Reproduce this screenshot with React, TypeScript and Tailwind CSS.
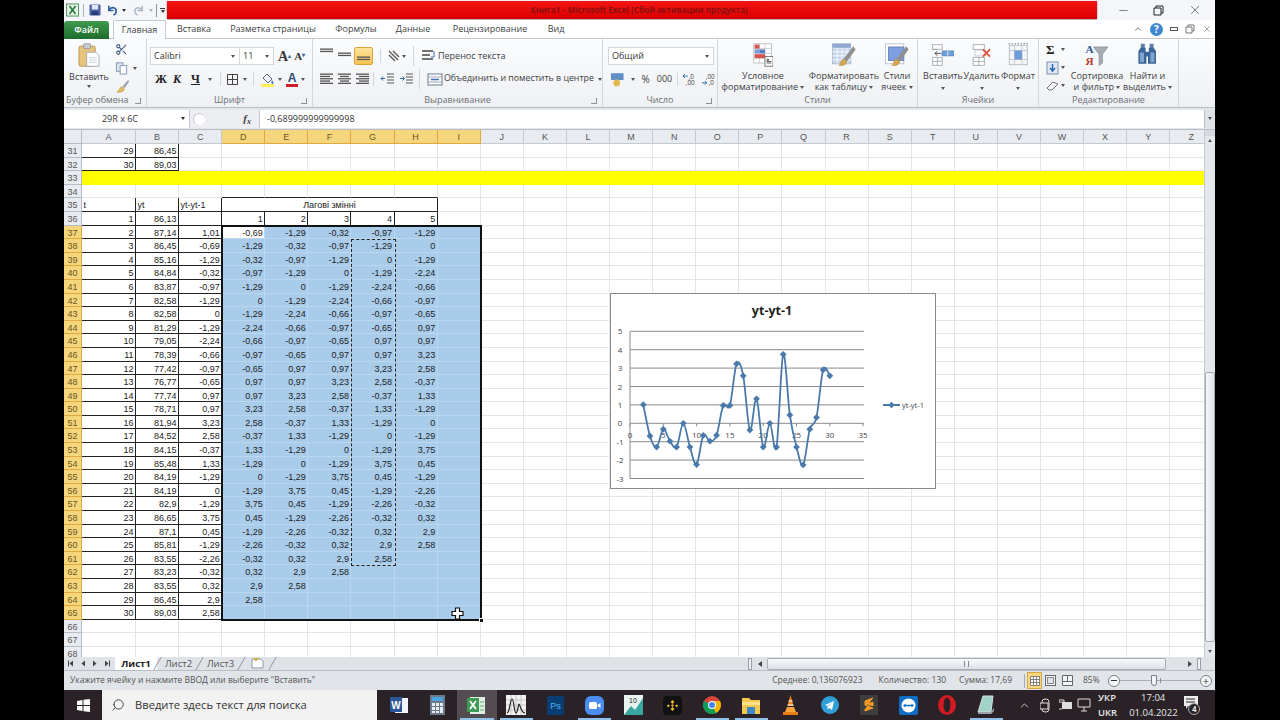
import { ChevronUp, Search, X, Minus, Scissors } from "lucide-react";

const sans = "font-['Open_Sans',sans-serif]";
const cellFont = "font-['Liberation_Sans',sans-serif]";

const diffs = ["1,01","-0,69","-1,29","-0,32","-0,97","-1,29","0","-1,29","-2,24","-0,66","-0,97","-0,65","0,97","0,97","3,23","2,58","-0,37","1,33","-1,29","0","-1,29","3,75","0,45","-1,29","-2,26","-0,32","0,32","2,9","2,58"];
const yt = ["87,14","86,45","85,16","84,84","83,87","82,58","82,58","81,29","79,05","78,39","77,42","76,77","77,74","78,71","81,94","84,52","84,15","85,48","84,19","84,19","82,9","86,65","87,1","85,81","83,55","83,23","83,55","86,45","89,03"];
const letters = "ABCDEFGHIJKLMNOPQRSTUVWXYZ".split("");

const blank = "border-r border-b border-[#e3e5e8]";
const boxed = "border-r border-b border-[#222]";

function Cell({ v, className = "", wide, left }: { v?: string; className?: string; wide?: boolean; left?: boolean }) {
  return (
    <div className={`${wide ? "w-[54px]" : "w-[43.1px]"} h-full shrink-0 overflow-hidden whitespace-nowrap px-[1.5px] leading-[14px] ${left ? "text-left" : "text-right"} ${className}`}>
      {v}
    </div>
  );
}

function RowHead({ n, on }: { n: number; on?: boolean }) {
  return (
    <div className={`w-[18px] h-full shrink-0 text-center leading-[14px] border-r border-b ${on ? "bg-[#f6d67c] border-[#e0a93f] text-[#6a5520]" : "bg-[#e8ecf1] border-[#b5bcc6] text-[#555]"}`}>
      {n}
    </div>
  );
}

function Filler({ from, className = blank }: { from: number; className?: string }) {
  return (
    <>
      {letters.slice(from).map((l) => (
        <Cell key={l} className={className} />
      ))}
    </>
  );
}

function Row({ children }: { children: React.ReactNode }) {
  return <div className="flex h-[13.6px]">{children}</div>;
}

function Sheet() {
  const rows = [];
  for (let i = 0; i < 29; i++) {
    const lags = [1, 2, 3, 4, 5].map((k) => diffs[i + k]);
    rows.push(
      <Row key={i}>
        <RowHead n={37 + i} on />
        <Cell wide v={String(i + 2)} className={boxed} />
        <Cell v={yt[i]} className={boxed} />
        <Cell v={diffs[i]} className={boxed} />
        {lags.map((v, k) => (
          <Cell key={k} v={v} className={`border-r border-b border-[#bcd6ee] ${i === 0 && k === 0 ? "bg-white" : "bg-[#a9cceb]"}`} />
        ))}
        <Cell className="border-r border-b border-[#bcd6ee] bg-[#a9cceb]" />
        <Filler from={9} />
      </Row>
    );
  }
  return (
    <div className={`${cellFont} text-[9px] text-[#222] w-[1140px]`}>
      <Row>
        <RowHead n={31} />
        <Cell wide v="29" className={boxed} />
        <Cell v="86,45" className={boxed} />
        <Filler from={2} />
      </Row>
      <Row>
        <RowHead n={32} />
        <Cell wide v="30" className={boxed} />
        <Cell v="89,03" className={boxed} />
        <Filler from={2} />
      </Row>
      <Row>
        <RowHead n={33} />
        <div className="flex-1 h-full bg-[#ffff00]" />
      </Row>
      <Row>
        <RowHead n={34} />
        <Cell wide className={blank} />
        <Cell className={blank} />
        <Cell className={blank} />
        {[0, 1, 2, 3, 4].map((k) => (
          <Cell key={k} className={boxed + " border-r-[#e3e5e8]"} />
        ))}
        <Filler from={8} />
      </Row>
      <Row>
        <RowHead n={35} />
        <Cell wide left v="t" className={boxed} />
        <Cell left v="yt" className={boxed} />
        <Cell left v="yt-yt-1" className={boxed} />
        <div className={`w-[215.5px] h-full shrink-0 text-center leading-[14px] ${boxed}`}>Лагові змінні</div>
        <Filler from={8} />
      </Row>
      <Row>
        <RowHead n={36} />
        <Cell wide v="1" className={boxed} />
        <Cell v="86,13" className={boxed} />
        <Cell className={boxed} />
        {["1", "2", "3", "4", "5"].map((v) => (
          <Cell key={v} v={v} className={boxed} />
        ))}
        <Filler from={8} />
      </Row>
      {rows}
      {[66, 67, 68].map((n) => (
        <Row key={n}>
          <RowHead n={n} />
          <Cell wide className={blank} />
          <Filler from={1} />
        </Row>
      ))}
    </div>
  );
}

function ColHeads() {
  return (
    <div className={`${cellFont} flex h-[14px] text-[9px] w-[1140px]`}>
      <div className="w-[18px] h-full shrink-0 bg-[#e8ecf1] border-r border-b border-[#b5bcc6]" />
      {letters.map((l, i) => {
        const on = i >= 3 && i <= 8;
        return (
          <div key={l} className={`${i === 0 ? "w-[54px]" : "w-[43.1px]"} shrink-0 h-full text-center leading-[14px] border-r border-b ${on ? "bg-[#f6d67c] border-[#e0a93f] text-[#6a5520]" : "bg-[#e8ecf1] border-[#c3c9d1] text-[#555]"}`}>
            {l}
          </div>
        );
      })}
    </div>
  );
}

function catmull(p: [number, number][]) {
  let d = `M${p[0][0]} ${p[0][1]}`;
  for (let i = 0; i < p.length - 1; i++) {
    const a = p[i - 1] ?? p[i];
    const b = p[i];
    const c = p[i + 1];
    const e = p[i + 2] ?? c;
    const t = 6;
    d += ` C${b[0] + (c[0] - a[0]) / t} ${b[1] + (c[1] - a[1]) / t} ${c[0] - (e[0] - b[0]) / t} ${c[1] - (e[1] - b[1]) / t} ${c[0]} ${c[1]}`;
  }
  return d;
}

function Chart() {
  const X = (v: number) => 20 + v * 6.66;
  const Y = (v: number) => 130.3 - v * 18.4;
  const pts = diffs.map((s, i) => [X(i + 2), Y(parseFloat(s.replace(",", ".")))] as [number, number]);
  return (
    <div className="absolute left-[546px] top-[163px] w-[326px] h-[196px] bg-white border border-[#8a8a8a]">
      <svg width="326" height="196" viewBox="0 0 326 196" className="absolute -left-px -top-px">
        <text x="162" y="22" textAnchor="middle" fontSize="12.5" fontWeight="700" fontFamily="Open Sans" fill="#222">yt-yt-1</text>
        {[5, 4, 3, 2, 1, 0, -1, -2, -3].map((v) => (
          <g key={v}>
            <line x1="20" x2="254" y1={Y(v)} y2={Y(v)} stroke="#8c8c8c" strokeWidth="1" />
            <text x="10" y={Y(v) + 3} textAnchor="middle" fontSize="8" fontFamily="Open Sans" fill="#444">{v}</text>
          </g>
        ))}
        <line x1="20" x2="20" y1={Y(5)} y2={Y(-3)} stroke="#8c8c8c" />
        {[0, 5, 10, 15, 20, 25, 30, 35].map((v) => (
          <g key={v}>
            <line x1={X(v)} x2={X(v)} y1={Y(0)} y2={Y(0) + 3} stroke="#8c8c8c" />
            <text x={X(v)} y={Y(0) + 15} textAnchor="middle" fontSize="8" fontFamily="Open Sans" fill="#444">{v}</text>
          </g>
        ))}
        <path d={catmull(pts)} fill="none" stroke="#4a7aaa" strokeWidth="1.800" />
        {pts.map(([x, y], i) => (
          <path key={i} d={`M${x} ${y - 3.4}L${x + 3.4} ${y}L${x} ${y + 3.4}L${x - 3.4} ${y}Z`} fill="#4a7aaa" />
        ))}
        <line x1="273" x2="290" y1="112" y2="112" stroke="#4a7aaa" strokeWidth="2" />
        <path d="M281.500 108.800L284.700 112L281.500 115.200L278.300 112Z" fill="#4a7aaa" />
        <text x="292" y="114.500" fontSize="7.500" fontFamily="Open Sans" fill="#444">yt-yt-1</text>
      </svg>
    </div>
  );
}

function Caret({ className = "" }: { className?: string }) {
  return <span className={`inline-block w-0 h-0 border-x-[2.5px] border-x-transparent border-t-[3px] border-t-[#555] ${className}`} />;
}

function Bars({ rows }: { rows: [number, number][] }) {
  return (
    <svg width="16" height="14" viewBox="0 0 16 14">
      {rows.map(([x, w], i) => (
        <rect key={i} x={x} y={1.5 + i * 2.3} width={w} height="1.3" fill="#555" />
      ))}
    </svg>
  );
}

function Indent({ right }: { right?: boolean }) {
  return (
    <svg width="15" height="14" viewBox="0 0 15 14">
      <path d="M7 2h7M7 5h7M7 8h7M7 11h7" stroke="#555" strokeWidth="1.200" />
      {right ? <path d="M1 6.500h4M3.500 4.500l2 2-2 2" stroke="#2f66b0" fill="none" /> : <path d="M5 6.500H1M3 4.500l-2 2 2 2" stroke="#2f66b0" fill="none" />}
    </svg>
  );
}

function PasteIcon() {
  return (
    <svg width="24" height="24" viewBox="0 0 30 31">
      <rect x="2" y="4" width="21" height="26" rx="2" fill="#e6c47e" stroke="#b08b45" />
      <rect x="8" y="1" width="9" height="6" rx="1" fill="#c9ced6" stroke="#8b8f96" />
      <path d="M12 12h12l4 4v14H12z" fill="#fff" stroke="#9aa1ab" />
      <path d="M15 19h10M15 22h10M15 25h10" stroke="#b9c0ca" />
    </svg>
  );
}

function BigCond() {
  return (
    <svg viewBox="0 0 26 30">
      <rect x="1" y="1" width="22" height="24" fill="#fff" stroke="#b5b9bf" />
      <path d="M1 7h22M1 13h22M1 19h22M8 1v24M15 1v24" stroke="#c2c6cc" />
      <rect x="2" y="2" width="6" height="5" fill="#d9534f" />
      <rect x="8" y="8" width="7" height="5" fill="#5a7fc0" />
      <rect x="2" y="14" width="13" height="5" fill="#d9534f" />
      <rect x="2" y="8" width="6" height="5" fill="#7a9bd6" />
      <rect x="15" y="17" width="10" height="12" fill="#fff" stroke="#666" />
      <path d="M17 20l3 1-3 1M17 25h6M17 23h6" stroke="#333" fill="none" />
    </svg>
  );
}

function Brush() {
  return (
    <>
      <path d="M29 4L17 20l4 3L32 8z" fill="#8f8f8f" />
      <path d="M16 20c-3 2-2 6-5 8 5 1 10-1 10-5z" fill="#d8a84e" stroke="#9b7a38" strokeWidth=".5" />
    </>
  );
}

function BigTable() {
  return (
    <svg viewBox="0 0 34 30">
      <rect x="3" y="1" width="23" height="25" fill="#c5d6ee" stroke="#a8b4c4" />
      <path d="M3 6h23M3 11h23M3 16h23M3 21h23M9 1v25M15 1v25M21 1v25" stroke="#fff" />
      <rect x="3" y="1" width="23" height="5" fill="#8fa9d3" />
      <Brush />
    </svg>
  );
}

function BigStyles() {
  return (
    <svg viewBox="0 0 34 30">
      <rect x="3" y="1" width="23" height="25" fill="#fff" stroke="#b6bcc5" />
      <rect x="7" y="5" width="19" height="17" fill="#7d9ee0" stroke="#5a79b8" />
      <Brush />
    </svg>
  );
}

function BigInsert() {
  return (
    <svg viewBox="0 0 30 30">
      <path d="M2 2h12v6H2zM2 18h12v10H2zM2 23h12M8 18v10M2 8h6" fill="#fff" stroke="#9a9fa6" />
      <rect x="14" y="10" width="14" height="6" fill="#6ea2d8" stroke="#4a7eb5" />
      <path d="M21 10v6" stroke="#fff" />
      <path d="M13 13H5M8 10l-3 3 3 3" fill="none" stroke="#333" />
    </svg>
  );
}

function BigDelete() {
  return (
    <svg viewBox="0 0 30 30">
      <path d="M4 2h14v6H4zM4 18h14v10H4zM4 23h14M11 18v10" fill="#fff" stroke="#9a9fa6" />
      <rect x="6" y="9" width="14" height="7" fill="none" stroke="#b0b5bc" strokeDasharray="2 1" />
      <path d="M16 8l9 9M25 8l-9 9" stroke="#e0533c" strokeWidth="2.200" />
    </svg>
  );
}

function BigFormat() {
  return (
    <svg viewBox="0 0 30 32">
      <rect x="3" y="3" width="24" height="26" fill="#f4f5f7" stroke="#a8adb4" />
      <path d="M3 10h24M3 22h24M10 3v26M20 3v26" stroke="#b9bec5" />
      <rect x="10" y="10" width="10" height="12" fill="#6f9bdb" />
      <path d="M2 1h26" stroke="#555" strokeDasharray="2 2" />
    </svg>
  );
}

function Big({ lines, icon, w }: { lines: React.ReactNode[]; icon: React.ReactNode; w: string }) {
  return (
    <div className={`${w} flex flex-col items-center shrink-0 pt-[4px]`}>
      <div className="h-[24px] flex items-center justify-center [&>svg]:h-[24px] [&>svg]:w-auto">{icon}</div>
      <div className="mt-[4px] text-center leading-[10.5px] whitespace-nowrap">
        {lines.map((l, i) => (
          <div key={i}>{l}</div>
        ))}
      </div>
    </div>
  );
}

function Group({ w, label, launcher, children, className = "", labelClass = "text-center" }: { w: string; label: string; launcher?: boolean; children: React.ReactNode; className?: string; labelClass?: string }) {
  return (
    <div className={`${w} relative shrink-0 flex flex-col h-full border-r border-[#d3d7dd]`}>
      <div className={`h-[55px] overflow-hidden ${className}`}>{children}</div>
      <div className={`h-[14px] leading-[14px] whitespace-nowrap text-[#6d7076] text-[9px] ${labelClass}`}>{label}</div>
      {launcher && <div className="absolute right-[5px] bottom-[3px] w-[6px] h-[6px] border-r border-b border-[#8d9097]" />}
    </div>
  );
}

function Ribbon() {
  return (
    <div className={`${sans} flex h-[69px] text-[9px] text-[#3d3f44] bg-gradient-to-b from-[#fbfcfd] to-[#eef0f3] border-b border-[#b8bdc4]`}>
      <Group w="w-[83px]" label="Буфер обмена" launcher className="flex" labelClass="text-left pl-[2px]">
        <div className="w-[47px] flex flex-col items-center pl-[3px] pt-[4px]">
          <PasteIcon />
          <span className="leading-[11px] mt-[4px]">Вставить</span>
          <Caret className="mt-[3px]" />
        </div>
        <div className="flex flex-col pl-[4px] pt-[4px]">
          <Scissors size={13} className="text-[#3f5e8c]" />
          <div className="flex items-center gap-[4px] mt-[5px]">
            <svg width="14" height="14" viewBox="0 0 14 15"><rect x="1" y="2" width="7" height="9" fill="#dfe7f2" stroke="#7d94b5" /><rect x="5" y="5" width="7" height="9" fill="#fff" stroke="#7d94b5" /></svg>
            <Caret />
          </div>
          <svg width="15" height="14" viewBox="0 0 16 15" className="mt-[4px]"><path d="M14 1L8 8l2 2 5-7z" fill="#9b9ea4" /><path d="M7 8c-2 1-2 4-5 6 4 1 8-1 8-3z" fill="#e2bd5d" stroke="#a88735" strokeWidth=".5" /></svg>
        </div>
      </Group>

      <Group w="w-[166px]" label="Шрифт" launcher className="pl-[3px] pt-[8px]">
        <div className="flex items-center h-[18px]">
          <div className="w-[90px] h-[18px] bg-white border border-[#d3d7dd] flex items-center justify-between pl-[3px] pr-[4px] text-[#333]">Calibri<Caret /></div>
          <div className="w-[34px] h-[18px] bg-white border border-l-0 border-[#d3d7dd] flex items-center justify-between pl-[3px] pr-[4px] text-[#333]">11<Caret /></div>
          <span className="ml-[4px] font-['Liberation_Serif',serif] font-bold text-[14px] text-[#333]">A<sup className="text-[6px] text-[#35609e]">▴</sup></span>
          <span className="ml-[3px] font-['Liberation_Serif',serif] font-bold text-[11px] text-[#333]">A<sup className="text-[6px] text-[#35609e]">▾</sup></span>
        </div>
        <div className="flex items-center h-[22px] mt-[3px] pl-[5px] text-[#222]">
          <span className="w-[18px] font-['Liberation_Serif',serif] font-bold text-[12px]">Ж</span>
          <span className="w-[18px] font-['Liberation_Serif',serif] font-bold italic text-[12px]">К</span>
          <span className="w-[17px] font-['Liberation_Serif',serif] font-bold underline text-[12px]">Ч</span>
          <Caret />
          <span className="w-px h-[14px] bg-[#d3d7dd] ml-[8px] mr-[4px]" />
          <svg width="13" height="13" viewBox="0 0 13 13" className="ml-[1px]"><path d="M1.500 1.500h10v10h-10zM6.500 1.500v10M1.500 6.500h10" fill="none" stroke="#444" /></svg>
          <Caret className="ml-[4px]" />
          <span className="w-px h-[14px] bg-[#d3d7dd] ml-[6px] mr-[6px]" />
          <svg width="15" height="15" viewBox="0 0 15 15"><path d="M7 2l5 5-4 4-5-5z" fill="#eef1f5" stroke="#5d6a7e" /><path d="M12 8c1 2 2 3 1 4-2 0-2-2-1-4z" fill="#3f6fb5" /><rect x="1" y="12" width="13" height="3" fill="#ffee55" /></svg>
          <Caret className="ml-[3px]" />
          <span className="relative ml-[4px] w-[12px] h-[15px] text-center font-['Liberation_Sans',sans-serif] font-bold text-[12px] leading-[12px] text-[#2e4a7d]">A<span className="absolute left-0 bottom-0 w-[12px] h-[3px] bg-[#d21f26]" /></span>
          <Caret className="ml-[3px]" />
        </div>
      </Group>

      <Group w="w-[290px]" label="Выравнивание" launcher className="pt-[8px] pl-[6px]">
        <div className="flex items-center h-[18px]">
          <span className="w-[18px] h-[18px] flex items-start"><Bars rows={[[1, 13], [1, 13]]} /></span>
          <span className="w-[18px] h-[18px] flex items-center pt-[3px]"><Bars rows={[[1, 13], [1, 13]]} /></span>
          <span className="w-[19px] h-[18px] -ml-[1px] rounded-[2px] bg-gradient-to-b from-[#fde49a] to-[#f9c450] border border-[#d9a441] flex items-end justify-center"><span className="h-[9px]"><Bars rows={[[1, 13], [1, 13]]} /></span></span>
          <span className="w-px h-[14px] bg-[#d3d7dd] ml-[7px] mr-[6px]" />
          <svg width="14" height="14" viewBox="0 0 14 14"><path d="M2 2l9 9M2 6l6 6M6 2l6 6" stroke="#555" strokeWidth="1.300" fill="none" /></svg>
          <Caret className="ml-[1px]" />
          <span className="w-px h-[20px] bg-[#d3d7dd] ml-[7px] mr-[7px]" />
          <svg width="16" height="14" viewBox="0 0 16 14"><path d="M1 2h11M1 6h8M1 10h11" stroke="#444" strokeWidth="1.400" /><path d="M13 2v6h-3" stroke="#3f6fb5" fill="none" /></svg>
          <span className="ml-[1px] text-[9px]">Перенос текста</span>
        </div>
        <div className="flex items-center h-[22px] mt-[3px]">
          <span className="w-[18px]"><Bars rows={[[1, 13], [1, 10], [1, 13], [1, 10], [1, 13]]} /></span>
          <span className="w-[18px]"><Bars rows={[[1, 13], [3, 9], [1, 13], [3, 9], [1, 13]]} /></span>
          <span className="w-[18px]"><Bars rows={[[1, 13], [4, 10], [1, 13], [4, 10], [1, 13]]} /></span>
          <span className="w-px h-[14px] bg-[#d3d7dd] mr-[6px]" />
          <span className="w-[19px]"><Indent /></span>
          <span className="w-[16px]"><Indent right /></span>
          <span className="w-px h-[20px] bg-[#d3d7dd] ml-[4px] mr-[7px]" />
          <svg width="16" height="13" viewBox="0 0 16 13"><rect x="1" y="1" width="14" height="11" fill="#fff" stroke="#6a7a90" /><path d="M1 4h14M1 9h14" stroke="#9aa5b3" /><path d="M4 6.500h8" stroke="#3f6fb5" strokeWidth="1.500" /></svg>
          <span className="ml-[1px] text-[8.8px] whitespace-nowrap">Объединить и поместить в центре</span>
          <Caret className="ml-[4px]" />
        </div>
      </Group>

      <Group w="w-[115px]" label="Число" launcher className="pt-[8px] pl-[5px]">
        <div className="w-[106px] h-[18px] bg-white border border-[#d3d7dd] flex items-center justify-between pl-[3px] pr-[4px] text-[#333]">Общий<Caret /></div>
        <div className="flex items-center h-[22px] mt-[3px] pl-[2px]">
          <svg width="15" height="15" viewBox="0 0 15 15"><rect x="1" y="1" width="13" height="7" fill="#5e8fc7" /><circle cx="7" cy="11" r="3.500" fill="#e4b94e" /></svg>
          <Caret className="ml-[7px]" />
          <span className="ml-[6px] text-[10px]">%</span>
          <span className="ml-[7px] text-[9px]">000</span>
          <span className="w-px h-[14px] bg-[#d3d7dd] ml-[5px] mr-[4px]" />
          <svg width="17" height="15" viewBox="0 0 17 15"><path d="M1 4h5M3 2L1 4l2 2" stroke="#2f66b0" fill="none" /><text x="7" y="6.500" fontSize="6.500" fontFamily="Open Sans" fill="#444">,0</text><text x="4" y="13.500" fontSize="6.500" fontFamily="Open Sans" fill="#444">,00</text></svg>
          <svg width="17" height="15" viewBox="0 0 17 15" className="ml-[2px]"><text x="5" y="6.500" fontSize="6.500" fontFamily="Open Sans" fill="#444">,00</text><path d="M1 11h5M4 9l2 2-2 2" stroke="#2f66b0" fill="none" /><text x="8" y="13.500" fontSize="6.500" fontFamily="Open Sans" fill="#444">,0</text></svg>
        </div>
      </Group>

      <Group w="w-[200px]" label="Стили" className="flex">
        <Big w="w-[90px]" icon={<BigCond />} lines={["Условное", <>форматирование <Caret className="mb-[1px]" /></>]} />
        <Big w="w-[72px]" icon={<BigTable />} lines={["Форматировать", <>как таблицу <Caret className="mb-[1px]" /></>]} />
        <Big w="w-[34px]" icon={<BigStyles />} lines={["Стили", <>ячеек <Caret className="mb-[1px]" /></>]} />
      </Group>

      <Group w="w-[121px]" label="Ячейки" className="flex pl-[7px]">
        <Big w="w-[36px]" icon={<BigInsert />} lines={["Вставить", <Caret />]} />
        <Big w="w-[41px]" icon={<BigDelete />} lines={["Удалить", <Caret />]} />
        <Big w="w-[32px]" icon={<BigFormat />} lines={["Формат", <Caret />]} />
      </Group>

      <Group w="w-[140px]" label="Редактирование" className="flex">
        <div className="w-[30px] pl-[7px] pt-[3px] flex flex-col gap-[3px]">
          <div className="flex items-center h-[15px]"><span className="w-[15px] font-['Liberation_Serif',serif] font-bold text-[13px] leading-none text-[#222]">Σ</span><Caret /></div>
          <div className="flex items-center h-[15px]"><svg width="13" height="14" viewBox="0 0 13 14" className="mr-[2px]"><rect x="1" y="1" width="11" height="12" fill="#dfe8f5" stroke="#7f93ad" /><path d="M6.500 3v6M4 7l2.500 3L9 7" stroke="#2f66b0" strokeWidth="1.500" fill="none" /></svg><Caret /></div>
          <div className="flex items-center h-[15px]"><svg width="13" height="12" viewBox="0 0 13 12" className="mr-[2px]"><path d="M1 8l6-6 5 2-6 6H3z" fill="#f0f1f3" stroke="#777" /></svg><Caret /></div>
        </div>
        <Big w="w-[56px]" icon={
          <svg viewBox="0 0 32 30">
            <text x="2" y="13" fontFamily="Liberation Serif" fontWeight="700" fontSize="14" fill="#31588f">А</text>
            <text x="2" y="27" fontFamily="Liberation Serif" fontWeight="700" fontSize="14" fill="#b53b2e">Я</text>
            <path d="M12 5h18l-7 9v11l-4 3V14z" fill="#a8aeb6" stroke="#858b93" />
          </svg>
        } lines={["Сортировка", <>и фильтр <Caret className="mb-[1px]" /></>]} />
        <Big w="w-[45px]" icon={
          <svg viewBox="0 0 28 30">
            <path d="M6 1h5v6H6zM17 1h5v6h-5z" fill="#5d7fa8" />
            <path d="M3 10l3-4h6v5h4V6h6l3 4v16h-10V17h-2v9H3z" fill="#3a6797" />
            <path d="M5 12h5v12H5zM18 12h5v12h-5z" fill="#7fa4cd" />
          </svg>
        } lines={["Найти и", <>выделить <Caret className="mb-[1px]" /></>]} />
      </Group>
    </div>
  );
}

function TitleBar() {
  return (
    <div className="flex items-center h-[20px] bg-[#f4f6f9]">
      <div className="w-[92px] shrink-0 flex items-center pl-[1px]">
        <svg width="13" height="14" viewBox="0 0 15 15" className="ml-[1px]"><rect x=".5" y=".5" width="14" height="14" fill="#e9f1e6" stroke="#3d8a49" /><path d="M4 3l7 9M11 3l-7 9" stroke="#1f7a35" strokeWidth="1.800" /></svg>
        <span className="w-px h-[13px] bg-[#aab0b8] mx-[4px]" />
        <svg width="12" height="12" viewBox="0 0 13 13" className="ml-[1px]"><rect x=".5" y=".5" width="12" height="12" rx="1" fill="#4d5fa3" /><rect x="3" y="1" width="7" height="5" fill="#dfe6f5" /><rect x="3" y="8" width="7" height="4" fill="#273a78" /></svg>
        <svg width="12" height="12" viewBox="0 0 13 13" className="ml-[6px]"><path d="M2 2v5h5" fill="none" stroke="#2e5f9e" strokeWidth="1.800" /><path d="M2 7c3-5 8-3 8 1 0 2-1 3-3 4" fill="none" stroke="#2e5f9e" strokeWidth="1.800" /></svg>
        <Caret className="ml-[3px] !border-t-[#333]" />
        <svg width="12" height="12" viewBox="0 0 13 13" className="ml-[6px]"><path d="M11 2v5H6" fill="none" stroke="#a9b4c0" strokeWidth="1.500" /><path d="M11 7C8 2 3 4 3 8c0 2 1 3 3 4" fill="none" stroke="#a9b4c0" strokeWidth="1.500" /></svg>
        <Caret className="ml-[5px] !border-t-[#a9b0b8]" />
      </div>
      <span className="w-px h-[13px] bg-[#8a9099]" />
      <div className="ml-[1px] w-[9px] flex flex-col items-center gap-[1px]"><span className="w-[5px] h-px bg-[#333]" /><Caret className="!border-t-[#333]" /></div>
      <div className="w-[930px] h-[18px] bg-gradient-to-b from-[#f51313] to-[#d90000] shadow-[0_1px_2px_rgba(0,0,0,.4)] flex items-center justify-center pl-[14px]">
        <span className={`${sans} text-[8.4px] text-[#7a1010] font-semibold`}>Книга1 - Microsoft Excel (Сбой активации продукта)</span>
      </div>
      <div className="flex-1 flex items-center text-[#222] pl-[20px]">
        <Minus size={13} strokeWidth={1} />
        <svg width="11" height="11" viewBox="0 0 11 11" className="ml-[23px]"><path d="M3 3V1h7v7H8M1 3h7v7H1z" fill="none" stroke="#222" /></svg>
        <X size={14} strokeWidth={1} className="ml-[24px]" />
      </div>
    </div>
  );
}

function Tabs() {
  const tabs: [string, string][] = [
    ["Вставка", "w-[56px]"],
    ["Разметка страницы", "w-[102px]"],
    ["Формулы", "w-[64px]"],
    ["Данные", "w-[50px]"],
    ["Рецензирование", "w-[104px]"],
    ["Вид", "w-[28px]"],
  ];
  return (
    <div className={`${sans} flex items-end h-[19px] text-[9px] text-[#3d3f44] bg-white border-b border-[#c5c9cf]`}>
      <div className="w-[45px] h-[18px] -mb-px rounded-t-[3px] bg-gradient-to-b from-[#3f9b4e] to-[#1d6d2d] text-white text-center leading-[18px] font-semibold">Файл</div>
      <div className="w-[53px] h-[19px] -mb-px ml-[4px] bg-[#fbfcfd] border border-b-0 border-[#c5c9cf] rounded-t-[2px] text-center leading-[18px]">Главная</div>
      {tabs.map(([t, w]) => (
        <div key={t} className={`${w} h-[18px] text-center leading-[18px] whitespace-nowrap`}>{t}</div>
      ))}
      <div className="flex-1 h-[18px] flex items-center justify-end pr-[3px] gap-[7px]">
        <ChevronUp size={10} className="text-[#555]" />
        <span className="w-[13px] h-[13px] rounded-full bg-[#3f86d0] text-white text-[10px] font-bold leading-[13px] text-center">?</span>
        <span className="w-[8px] h-[4px] border border-[#555]" />
        <svg width="10" height="10" viewBox="0 0 10 10"><path d="M3 3V1h6v6H7M1 3h6v6H1z" fill="none" stroke="#777" /></svg>
        <X size={10} className="text-[#999]" />
      </div>
    </div>
  );
}

function FormulaBar() {
  return (
    <div className={`${sans} flex items-center h-[22px] bg-[#e3e6ea] text-[9px] text-[#333] border-b border-[#b8bdc4]`}>
      <div className="w-[126px] h-[18px] bg-white flex items-center justify-between pr-[4px] border-r border-[#c5c9cf]">
        <span className="w-[112px] text-center">29R x 6C</span>
        <Caret className="!border-t-[#333]" />
      </div>
      <div className="w-[69px] h-[18px] flex items-center bg-[#eceef1] pl-[3px] shrink-0">
        <span className="w-[12px] h-[12px] rounded-full border-l border-t border-[#c3c8ce] bg-white" />
        <span className="ml-auto mr-[8px] font-['Liberation_Serif',serif] italic font-bold text-[11px] text-[#444]">f<sub className="text-[8px]">x</sub></span>
      </div>
      <div className="flex-1 h-[18px] bg-white pl-[7px] leading-[18px] border-l border-[#c5c9cf]">-0,689999999999998</div>
      <div className="w-[11px] h-[18px] bg-[#dfe3e8] flex items-center justify-center border-l border-[#b8bdc4]"><Caret /></div>
    </div>
  );
}

function VScroll() {
  return (
    <div className="w-[11px] shrink-0 bg-[#e4e7eb] border-l border-[#c6cad0] flex flex-col items-center">
      <div className="h-[6px] w-full bg-[#d6dae0]" />
      <div className="h-[9px] flex items-center"><Caret className="rotate-180" /></div>
      <div className="h-[227px]" />
      <div className="h-[270px] w-[10px] bg-gradient-to-r from-[#f7f8fa] to-[#dfe3e8] border border-[#a4aab2] rounded-[2px]" />
      <div className="flex-1" />
      <div className="h-[11px] flex items-center"><Caret /></div>
    </div>
  );
}

function NavArrow({ dir, stop }: { dir: "l" | "r"; stop?: boolean }) {
  return (
    <svg width="6" height="7" viewBox="0 0 6 7">
      <path d={dir === "l" ? "M5 .5v6L1.500 3.500z" : "M1 .5v6l3.500-3z"} fill="#444" />
      {stop && <path d={dir === "l" ? "M.5 .5v6" : "M5.500 .5v6"} stroke="#444" />}
    </svg>
  );
}

function Slant() {
  return <span className="w-px h-full bg-[#8f959d] -skew-x-[30deg] shrink-0" />;
}

function SheetTabs() {
  return (
    <div className={`${sans} flex items-center h-[14px] bg-[#dfe3e8] text-[9.500px] text-[#555] border-b border-[#b8bdc4]`}>
      <div className="w-[47px] pl-[4px] flex items-center gap-[6px] shrink-0"><NavArrow dir="l" stop /><NavArrow dir="l" /><NavArrow dir="r" /><NavArrow dir="r" stop /></div>
      <div className="w-[42px] text-center font-bold text-[#222] bg-white h-full leading-[13px] ml-[4px]">Лист1</div>
      <Slant />
      <div className="w-[41px] text-center h-full leading-[13px]">Лист2</div>
      <Slant />
      <div className="w-[41px] text-center h-full leading-[13px]">Лист3</div>
      <Slant />
      <div className="w-[30px] h-full flex items-center justify-center">
        <svg width="13" height="11" viewBox="0 0 13 11"><path d="M1 1h9l2 2v7H1z" fill="#fff" stroke="#8a97a8" /><path d="M3 0l2 3 2-3" fill="#e7b93e" stroke="#c2972a" /></svg>
      </div>
      <Slant />
      <div className="flex-1" />
      <div className="w-[4px] h-[12px] border border-[#9aa0a8] bg-[#eef0f3] mr-[6px]" />
      <span className="w-0 h-0 border-y-[3px] border-y-transparent border-r-[4px] border-r-[#444] mr-[5px]" />
      <div className="w-[399px] h-[12px] bg-gradient-to-b from-[#f8f9fb] to-[#dde1e6] border border-[#a8adb4] rounded-[2px] flex items-center justify-center">
        <span className="w-[5px] h-[6px] border-x border-[#888]" />
      </div>
      <span className="w-0 h-0 border-y-[3px] border-y-transparent border-l-[4px] border-l-[#444] ml-[22px]" />
      <div className="w-[4px] h-[12px] border border-[#9aa0a8] bg-[#eef0f3] ml-[5px] mr-[14px]" />
    </div>
  );
}

function StatusBar() {
  return (
    <div className={`${sans} flex items-center h-[19px] bg-[#e1e4e9] text-[8.500px] text-[#555] pl-[6px]`}>
      <span className="whitespace-nowrap">Укажите ячейку и нажмите ВВОД или выберите "Вставить"</span>
      <div className="flex-1" />
      <span className="whitespace-nowrap">Среднее: 0,136076923</span>
      <span className="ml-[16px] whitespace-nowrap">Количество: 130</span>
      <span className="ml-[13px] whitespace-nowrap">Сумма: 17,69</span>
      <span className="w-px h-[14px] bg-[#a8adb4] ml-[12px] mr-[2px]" />
      <span className="w-[15px] h-[17px] bg-[#fbd87e] border border-[#d9a441] flex items-center justify-center">
        <svg width="10" height="10" viewBox="0 0 10 10"><path d="M.500.500h9v9h-9zM.500 3.500h9M.500 6.500h9M3.500.500v9M6.500.500v9" fill="#fff" stroke="#555" strokeWidth=".7" /></svg>
      </span>
      <svg width="11" height="11" viewBox="0 0 11 11" className="ml-[3px]"><rect x=".5" y=".5" width="10" height="10" fill="#f5f6f8" stroke="#666" /><rect x="2.500" y="2.500" width="6" height="6" fill="#dfe3e8" stroke="#888" /></svg>
      <svg width="11" height="11" viewBox="0 0 11 11" className="ml-[6px]"><path d="M.5.5h10v10H.5zM5.500.5v6M.5 6.500h10" fill="#f5f6f8" stroke="#666" /></svg>
      <span className="ml-[10px] w-[18px]">85%</span>
      <span className="ml-[7px] w-[12px] h-[12px] rounded-full border border-[#7a8089] bg-[#f7f8fa] flex items-center justify-center"><span className="w-[6px] h-px bg-[#333]" /></span>
      <div className="relative w-[80px] h-px bg-[#a8adb4]">
        <span className="absolute left-[31px] -top-[5px] w-[6px] h-[11px] bg-[#f4f5f7] border border-[#7a8089] rounded-b-[3px]" />
        <span className="absolute left-[40px] -top-[2px] w-px h-[5px] bg-[#8a9099]" />
      </div>
      <span className="w-[12px] h-[12px] rounded-full border border-[#7a8089] bg-[#f7f8fa] flex items-center justify-center text-[#333] text-[11px] leading-none">+</span>
      <span className="w-[3px]" />
    </div>
  );
}

const taskApps: { key: string; icon: React.ReactNode; bar?: boolean; active?: boolean }[] = [
  { key: "word", bar: false, icon: <svg width="18" height="18" viewBox="0 0 18 18"><rect x="5" y="2" width="13" height="15" fill="#f3f6fb" /><rect x="0" y="1" width="12" height="15" fill="#2a5699" /><text x="6" y="12.500" textAnchor="middle" fontSize="10" fontWeight="700" fontFamily="Liberation Sans" fill="#fff">W</text></svg> },
  { key: "calc", icon: <svg width="15" height="20" viewBox="0 0 15 20"><rect width="15" height="20" fill="#6b7a88" /><rect x="2" y="2" width="11" height="4" fill="#4aa3df" /><path d="M2 8h3v3H2zM6 8h3v3H6zM10 8h3v3h-3zM2 12h3v3H2zM6 12h3v3H6zM10 12h3v6h-3zM2 16h3v2H2zM6 16h3v2H6z" fill="#e7eaee" /></svg> },
  { key: "excel", active: true, bar: true, icon: <svg width="19" height="19" viewBox="0 0 19 19"><rect x="3" y="1" width="15" height="17" fill="#dfeee3" /><rect x="0" y="2" width="12" height="14" fill="#3d9a52" /><path d="M3 5l6 8M9 5l-6 8" stroke="#fff" strokeWidth="1.800" /><path d="M13 6h4M13 10h4M13 14h4" stroke="#5aaa6d" /></svg> },
  { key: "plot", bar: true, icon: <svg width="20" height="20" viewBox="0 0 20 20"><rect width="20" height="20" fill="#f2f2f2" /><path d="M0 5h20M0 10h20M0 15h20M5 0v20M10 0v20M15 0v20" stroke="#c8c8c8" /><path d="M1 18c3 0 3-14 5-14s2 14 4 14 2-9 3-9 2 9 6 9" fill="none" stroke="#222" strokeWidth="1.200" /></svg> },
  { key: "ps", icon: <svg width="17" height="19" viewBox="0 0 17 19"><rect width="17" height="19" rx="1" fill="#0a3e73" /><text x="8.500" y="13" textAnchor="middle" fontSize="9" fontFamily="Liberation Sans" fill="#4cb0f2">Ps</text></svg> },
  { key: "zoom", bar: true, icon: <svg width="19" height="19" viewBox="0 0 19 19"><rect width="19" height="19" rx="6" fill="#4b8cf0" /><rect x="4" y="6" width="8" height="7" rx="1.500" fill="#fff" /><path d="M12.500 9l3-2v5l-3-2z" fill="#fff" /></svg> },
  { key: "chart", icon: <svg width="19" height="20" viewBox="0 0 19 20"><rect width="19" height="20" fill="#e8f4ef" /><path d="M0 20l7-9 4 4 8-12v17z" fill="#3aa6a0" /><text x="5" y="8" fontSize="7" fontFamily="Liberation Sans" fill="#222">10</text></svg> },
  { key: "binance", icon: <svg width="19" height="19" viewBox="0 0 19 19"><rect width="19" height="19" rx="4" fill="#111" /><path d="M9.500 4l2 2-2 2-2-2zM5 8.500l2 1-2 2-1-2zM14 8.500l1 1-1 2-2-2zM9.500 11l2 2-2 2-2-2zM9.500 8l1.500 1.500-1.500 1.500L8 9.500z" fill="#e8b931" /></svg> },
  { key: "chrome", bar: true, icon: <svg width="18" height="18" viewBox="0 0 18 18"><circle cx="9" cy="9" r="9" fill="#db4437" /><path d="M9 9L1.500 14A9 9 0 0 1 1 5z" fill="#0f9d58" /><path d="M9 18A9 9 0 0 1 1.500 14L5 9h4l5 0 3 4a9 9 0 0 1-8 5z" fill="#0f9d58" /><path d="M9 5h8a9 9 0 0 1-4 12L9 9z" fill="#f4b400" /><circle cx="9" cy="9" r="4" fill="#fff" /><circle cx="9" cy="9" r="3" fill="#4285f4" /></svg> },
  { key: "folder", bar: true, icon: <svg width="18" height="17" viewBox="0 0 18 17"><path d="M0 1h7l2 2h9v14H0z" fill="#f2c94c" /><rect x="0" y="5" width="18" height="3" fill="#fbe08a" /><rect x="5" y="10" width="8" height="7" fill="#3f88c5" /></svg> },
  { key: "vlc", icon: <svg width="17" height="20" viewBox="0 0 17 20"><path d="M8.500 0l3 11h-6z" fill="#f08a1d" /><path d="M5 12h7l2 5H3z" fill="#f6a33a" /><path d="M6.500 6h4M5.500 10h6" stroke="#fff" strokeWidth="1.200" /><rect x="1" y="17" width="15" height="3" fill="#e67e16" /></svg> },
  { key: "telegram", icon: <svg width="18" height="18" viewBox="0 0 18 18"><circle cx="9" cy="9" r="9" fill="#2f9fd8" /><path d="M4 9l9-4-2 9-3-2-1.500 1.500V10.500L12 6.500 6 10z" fill="#fff" /></svg> },
  { key: "sublime", icon: <svg width="18" height="20" viewBox="0 0 18 20"><rect width="18" height="20" fill="#3d3d3d" /><path d="M13 3L5 6v4l8 3-8 3 0-2M5 10l8-3v4" fill="#f59a23" stroke="#f59a23" /></svg> },
  { key: "teamviewer", icon: <svg width="19" height="19" viewBox="0 0 19 19"><rect width="19" height="19" rx="2" fill="#0e6cc4" /><circle cx="9.500" cy="9.500" r="7" fill="#fff" /><path d="M4 9.500l2.500-2v1.300h6V7.500l2.500 2-2.500 2v-1.300h-6v1.300z" fill="#0e6cc4" /></svg> },
  { key: "opera", icon: <svg width="18" height="20" viewBox="0 0 18 20"><ellipse cx="9" cy="10" rx="9" ry="10" fill="#d41a22" /><ellipse cx="9" cy="10" rx="3.500" ry="7.500" fill="#2a2226" /></svg> },
  { key: "notes", bar: true, icon: <svg width="18" height="20" viewBox="0 0 18 20"><path d="M6 1h10l-2 16H1z" fill="#9fd3c7" stroke="#d8dde2" /><path d="M1 17h13l3-4v3l-3 3H1z" fill="#9aa2aa" /></svg> },
];

function Taskbar() {
  return (
    <div className={`${sans} flex items-center h-[30px] bg-[#2a2226] text-[#e8e8e8]`}>
      <div className="w-[38px] h-full flex items-center justify-center shrink-0">
        <svg width="13" height="13" viewBox="0 0 13 13"><path d="M0 2l5.500-1v5H0zM6.500.8L13 0v6H6.500zM0 7h5.500v5L0 11zM6.500 7H13v6l-6.500-.8z" fill="#fff" /></svg>
      </div>
      <div className="w-[275px] h-full bg-[#f2f2f2] flex items-center shrink-0 text-[#333]">
        <Search size={14} strokeWidth={1.5} className="ml-[9px] -scale-x-100" />
        <span className="ml-[10px] text-[11.2px] whitespace-nowrap">Введите здесь текст для поиска</span>
      </div>
      <div className="flex h-full ml-[2px]">
        {taskApps.map((a) => (
          <div key={a.key} className={`relative w-[39.2px] h-full flex items-center justify-center shrink-0 ${a.active ? "bg-[#544c50]" : ""}`}>
            {a.icon}
            {a.bar && <span className="absolute bottom-0 left-[3px] right-[3px] h-[2px] bg-[#8fc1ea]" />}
          </div>
        ))}
      </div>
      <div className="flex-1 flex items-center pl-[12px]">
        <ChevronUp size={13} strokeWidth={1.5} />
        <svg width="11" height="15" viewBox="0 0 11 15" className="ml-[9px]"><rect x="2" y="1" width="7" height="13" rx="3" fill="none" stroke="#ddd" /><rect x="0" y="5" width="8" height="6" fill="#2a2226" stroke="#ddd" /></svg>
        <svg width="14" height="12" viewBox="0 0 14 12" className="ml-[8px]"><rect x="3" y="3" width="10" height="7" fill="#ddd" /><path d="M0 1h5v2H0zM0 10h3" stroke="#ddd" /></svg>
        <svg width="14" height="14" viewBox="0 0 14 14" className="ml-[4px]"><path d="M1 1h12v8H1zM7 9v4M4 13h6" fill="none" stroke="#ddd" /></svg>
        <div className="ml-[7px] text-[9.5px] leading-[15px] font-semibold"><div>УКР</div><div>UKR</div></div>
        <div className="ml-[12px] w-[48px] text-center text-[9.5px] leading-[15px] whitespace-nowrap"><div>17:04</div><div>01.04.2022</div></div>
        <div className="relative ml-[7px] w-[16px] h-[22px]">
          <svg width="14" height="14" viewBox="0 0 14 14" className="absolute left-0 top-[2px]"><path d="M0 0h14v10H4l-2 3v-3H0z" fill="#eee" /><path d="M2 3h9M2 6h9" stroke="#2a2226" /></svg>
          <span className="absolute left-[4px] top-[9px] w-[12px] h-[12px] rounded-full bg-[#2a2226] border border-[#aaa] text-[8px] leading-[10px] text-center font-bold">4</span>
        </div>
      </div>
    </div>
  );
}

export default function App() {
  return (
    <div className="w-[1280px] h-[720px] overflow-hidden bg-black pl-[64px]">
      <div className="w-[1151px] h-full flex flex-col bg-white">
        <TitleBar />
        <Tabs />
        <Ribbon />
        <FormulaBar />
        <div className="relative flex h-[527px] overflow-hidden">
          <div className="flex-1 overflow-hidden bg-white">
            <ColHeads />
            <Sheet />
          </div>
          <VScroll />
          {/* selection frame, copy ants and cursor lie over the cells */}
          <div className="absolute left-[157px] top-[95px] w-[261px] h-[396px] border-2 border-[#111]" />
          <div className="absolute left-[415px] top-[488px] w-[5px] h-[5px] bg-[#111] border border-white" />
          <div className="absolute left-[287px] top-[109px] w-[45px] h-[327px] border-[1.5px] border-dashed border-[#222]" />
          <svg width="13" height="13" viewBox="0 0 13 13" className="absolute left-[387px] top-[477px]">
            <path d="M4.500 1h4v3.500H12v4H8.500V12h-4V8.500H1v-4h3.500z" fill="#fff" stroke="#111" strokeWidth="1.200" />
          </svg>
          <Chart />
        </div>
        <SheetTabs />
        <StatusBar />
        <Taskbar />
      </div>
    </div>
  );
}
